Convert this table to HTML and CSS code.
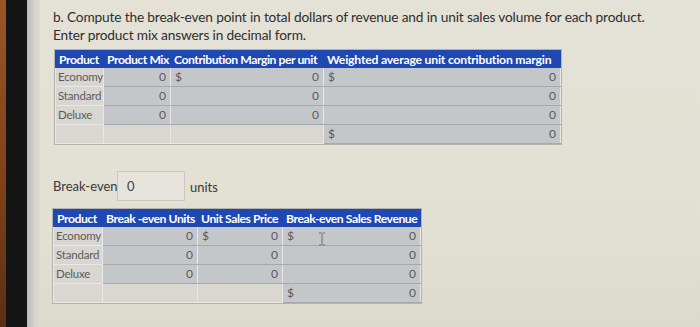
FILE: index.html
```html
<!DOCTYPE html>
<html lang="en">
<head>
<meta charset="utf-8">
<title>Break-even</title>
<link rel="stylesheet" href="styles.css">
</head>
<body>
<div class="screen">
  <div class="edge-orange"></div>
  <div class="edge-black"></div>
  <div class="edge-grey"></div>
  <main class="content">
    <p class="prompt">b. Compute the break-even point in total dollars of revenue and in unit sales volume for each product.<br>Enter product mix answers in decimal form.</p>

    <table class="grid grid-mix">
      <colgroup><col class="c1"><col class="c2"><col class="c3"><col class="c4"></colgroup>
      <thead>
        <tr><th>Product</th><th>Product Mix</th><th>Contribution Margin per unit</th><th>Weighted average unit contribution margin</th></tr>
      </thead>
      <tbody>
        <tr><td class="lbl">Economy</td><td class="inp num">0</td><td class="inp"><div class="money"><span>$</span><span>0</span></div></td><td class="inp"><div class="money"><span>$</span><span>0</span></div></td></tr>
        <tr><td class="lbl">Standard</td><td class="inp num">0</td><td class="inp num">0</td><td class="inp num">0</td></tr>
        <tr><td class="lbl">Deluxe</td><td class="inp num">0</td><td class="inp num">0</td><td class="inp num">0</td></tr>
        <tr><td class="empty"></td><td class="empty"></td><td class="empty"></td><td class="inp"><div class="money"><span>$</span><span>0</span></div></td></tr>
      </tbody>
    </table>

    <div class="breakeven">
      <span class="be-label">Break-even</span>
      <span class="be-box">0</span>
      <span class="be-unit">units</span>
    </div>

    <div class="sales-wrap">
      <table class="grid grid-sales">
        <colgroup><col class="d1"><col class="d2"><col class="d3"><col class="d4"></colgroup>
        <thead>
          <tr><th>Product</th><th>Break -even Units</th><th>Unit Sales Price</th><th>Break-even Sales Revenue</th></tr>
        </thead>
        <tbody>
          <tr><td class="lbl">Economy</td><td class="inp num">0</td><td class="inp"><div class="money"><span>$</span><span>0</span></div></td><td class="inp"><div class="money"><span>$</span><span>0</span></div></td></tr>
          <tr><td class="lbl">Standard</td><td class="inp num">0</td><td class="inp num">0</td><td class="inp num">0</td></tr>
          <tr><td class="lbl">Deluxe</td><td class="inp num">0</td><td class="inp num">0</td><td class="inp num">0</td></tr>
          <tr><td class="empty"></td><td class="empty"></td><td class="empty"></td><td class="inp"><div class="money"><span>$</span><span>0</span></div></td></tr>
        </tbody>
      </table>
      <svg class="ibeam" width="8" height="14" viewBox="0 0 8 14"><path d="M1 1h2.5M4.5 1H7M4 1.5v11M1 13h2.5M4.5 13H7" stroke="#6b6b70" stroke-width="1" fill="none"/></svg>
    </div>
  </main>
</div>
</body>
</html>
```
FILE: styles.css
```css
* { box-sizing: border-box; }
html, body { margin: 0; padding: 0; }
body {
  width: 700px;
  height: 327px;
  overflow: hidden;
  background: #e2dfd3;
  font-family: Lato, "Open Sans", sans-serif;
}
.screen {
  display: flex;
  height: 327px;
}
.edge-orange {
  width: 6px;
  flex: none;
  background: linear-gradient(180deg, #9a5524 0%, #7d4018 60%, #5a2e14 100%);
}
.edge-black {
  width: 21px;
  flex: none;
  background: #141414;
}
.edge-grey {
  width: 13px;
  flex: none;
  background: linear-gradient(90deg, #bdbbb6 0%, #d4d2cb 60%, #dedbcf 100%);
}
.content {
  flex: 1;
  padding-left: 13px;
  background: linear-gradient(180deg, #e4e1d6 0%, #e2dfd3 70%, #dcd9cd 100%);
}
.prompt {
  margin: 8px 0 0 0;
  font-size: 13.7px;
  letter-spacing: -0.15px;
  line-height: 18px;
  color: #2e2e2e;
}
.grid {
  border-collapse: collapse;
  table-layout: fixed;
  font-size: 12px;
  color: #5a5a5a;
}
.grid th {
  background: #1f48b3;
  color: #ffffff;
  font-weight: 700;
  font-size: 12.2px;
  letter-spacing: -0.45px;
  height: 17px;
  padding: 0 2px 0 3px;
  text-align: left;
  white-space: nowrap;
  border: 1px solid #1f48b3;
  line-height: 15px;
}
.grid-mix th:nth-child(4) { letter-spacing: -0.2px; }
.grid td {
  height: 19px;
  padding: 0 4px;
  border: 1px solid #e9e8e4;
  line-height: 16px;
  white-space: nowrap;
}
.grid-mix {
  width: 505px;
  margin: 6px 0 0 2px;
  outline: 1px solid #b3b2ad;
}
.grid-mix .c1 { width: 48px; }
.grid-mix .c2 { width: 67px; }
.grid-mix .c3 { width: 153px; }
.grid-mix .c4 { width: 237px; }
.grid-sales { width: 367px; outline: 1px solid #b3b2ad; }
.grid-sales .d1 { width: 49px; }
.grid-sales .d2 { width: 95px; }
.grid-sales .d3 { width: 85px; }
.grid-sales .d4 { width: 138px; }
.grid td.lbl {
  background: #d7d6d0;
  color: #5c5c5c;
  font-size: 11.5px;
  letter-spacing: -0.2px;
  padding: 0 2px;
}
.inp {
  background: #c4c7c9;
  border-bottom-color: #a6a9ac !important;
}
.empty {
  background: #d9d7cf;
}
.num { text-align: right; }
.money {
  display: flex;
  justify-content: space-between;
}
.breakeven {
  display: flex;
  align-items: center;
  margin-top: 27px;
  height: 30px;
  font-size: 13px;
  color: #3a3a3a;
  white-space: nowrap;
}
.be-label { width: 64px; flex: none; }
.be-box {
  flex: none;
  width: 68px;
  height: 30px;
  border: 1px solid #c9c7c0;
  background: #e5e3db;
  padding-left: 9px;
  line-height: 28px;
  color: #444;
}
.be-unit { margin-left: 5px; padding-top: 2px; }
.sales-wrap {
  position: relative;
  margin-top: 8px;
  width: 367px;
}
.ibeam {
  position: absolute;
  left: 265px;
  top: 23px;
}
```
